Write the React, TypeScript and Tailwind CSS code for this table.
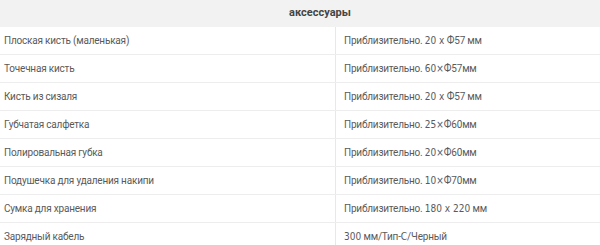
const rows: [string, React.ReactNode][] = [
  ["Плоская кисть (маленькая)", <>Приблизительно. <N>20 x</N> Ф57 мм</>],
  ["Точечная кисть", <>Приблизительно. <N>60×</N>Ф57мм</>],
  ["Кисть из сизаля", <>Приблизительно. <N>20 x</N> Ф57 мм</>],
  ["Губчатая салфетка", <>Приблизительно. <N>25×</N>Ф60мм</>],
  ["Полировальная губка", <>Приблизительно. <N>20×</N>Ф60мм</>],
  ["Подушечка для удаления накипи", <>Приблизительно. <N>10×</N>Ф70мм</>],
  ["Сумка для хранения", <>Приблизительно. <N>180 x 220</N> мм</>],
  ["Зарядный кабель", <><N>300</N> мм/Тип-<N>C</N>/Черный</>],
];

function N({ children }: { children: React.ReactNode }) {
  return (
    <span className="font-['Liberation_Sans_Narrow','DejaVu_Sans_Condensed',sans-serif] text-[10px] tracking-normal">
      {children}
    </span>
  );
}

export default function App() {
  return (
    <div className="w-[600px] h-[245px] overflow-hidden bg-white font-['Roboto',sans-serif] text-[10px] tracking-[-0.2px] text-[#5a5a5a]">
      <div className="h-[27px] bg-[#f2f2f2] flex items-center justify-center pl-[40px]">
        <span className="text-[11px] font-bold tracking-normal text-[#444]">аксессуары</span>
      </div>
      {rows.map(([name, value]) => (
        <div key={name} className="flex h-[28px] border-b border-[#ededed]">
          <div className="w-[336px] shrink-0 border-r border-[#e8e8e8] pl-[4px] flex items-center">
            <span>{name}</span>
          </div>
          <div className="flex-1 pl-[8px] flex items-center">
            <span>{value}</span>
          </div>
        </div>
      ))}
    </div>
  );
}
